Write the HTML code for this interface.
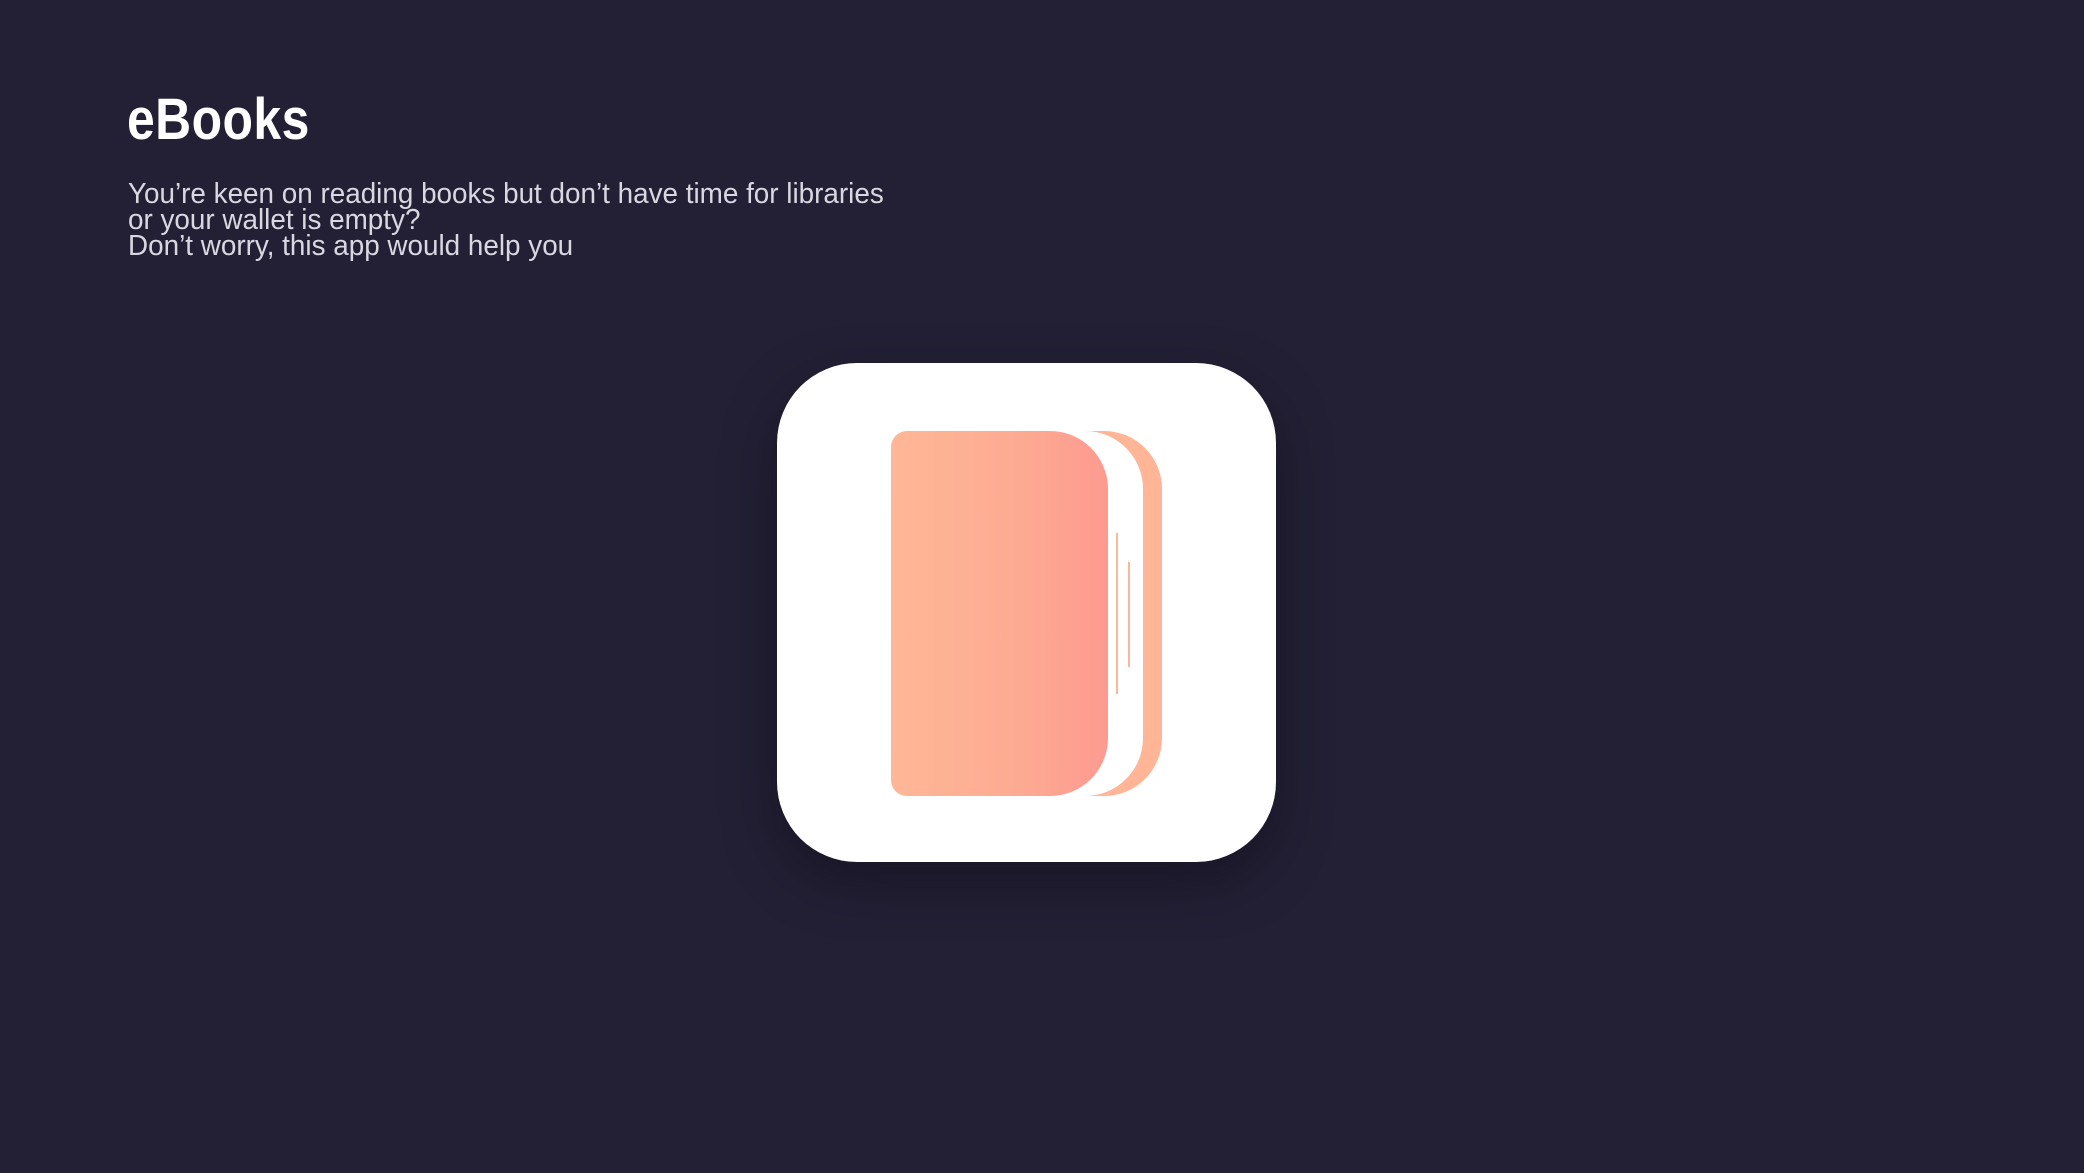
<!DOCTYPE html>
<html><head><meta charset="utf-8"><style>
html,body{margin:0;padding:0;}
body{width:2084px;height:1173px;background:#232035;position:relative;overflow:hidden;font-family:"Liberation Sans",sans-serif;}
.title{position:absolute;left:127px;top:86px;font-size:58px;font-weight:bold;color:#fff;transform:scaleX(0.86);transform-origin:left top;letter-spacing:0.5px;}
.body{position:absolute;left:128px;top:181px;font-size:29px;line-height:26px;color:#d9d8e2;transform:scaleX(0.96);transform-origin:left top;white-space:nowrap;font-weight:300;}
.card{position:absolute;left:777px;top:363px;width:499px;height:499px;border-radius:80px;background:#fff;box-shadow:0 20px 50px rgba(15,12,25,0.55);}
svg{position:absolute;left:0;top:0;}
</style></head><body>
<div class="title">eBooks</div>
<div class="body">You’re keen on reading books but don’t have time for libraries<br>or your wallet is empty?<br>Don’t worry, this app would help you</div>
<div class="card"></div>
<svg width="2084" height="1173" viewBox="0 0 2084 1173">
<defs><linearGradient id="g" x1="0" x2="1" y1="0" y2="0"><stop offset="0" stop-color="#ffb796"/><stop offset="0.6" stop-color="#fdaa92"/><stop offset="1" stop-color="#fd9a90"/></linearGradient></defs>
<rect x="1030" y="431" width="132" height="365" rx="58" fill="#ffb596"/>
<rect x="1020" y="431" width="123" height="365" rx="58" fill="#fff"/>
<path d="M907 431 H1050 A58 58 0 0 1 1108 489 V738 A58 58 0 0 1 1050 796 H907 A16 16 0 0 1 891 780 V447 A16 16 0 0 1 907 431 Z" fill="url(#g)"/>
<rect x="1116" y="533" width="2" height="161" fill="#ffb596"/>
<rect x="1128" y="562" width="2" height="105" fill="#ffb596"/>
</svg>
</body></html>
